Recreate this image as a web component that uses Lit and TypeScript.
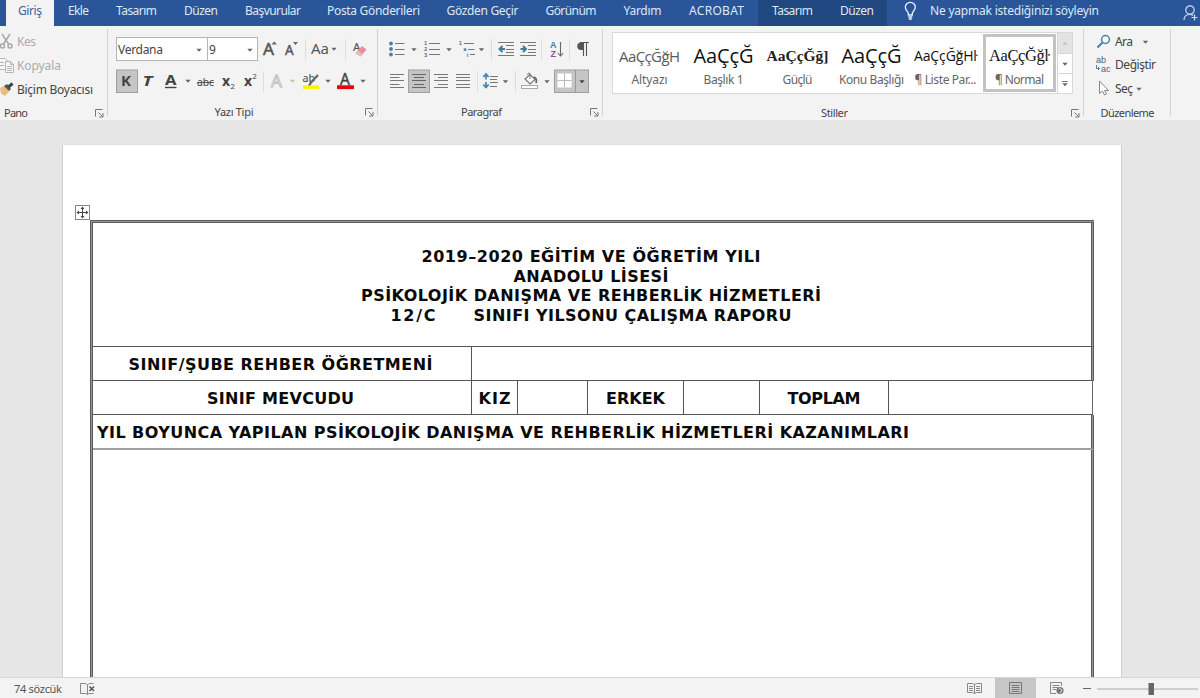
import { LitElement, html, svg, css, TemplateResult } from "lit";
import { customElement, property } from "lit/decorators.js";
import { styleMap } from "lit/directives/style-map.js";

/** A single line of text tracked out (or in) so that it takes exactly `w` pixels. */
@customElement("fit-text")
class FitText extends LitElement {
  @property() text = "";
  @property({ type: Number }) w = 0;

  static styles = css`
    :host { display: block; flex: none; }
    .run { display: inline-block; white-space: pre; }
  `;

  render() {
    return html`<span class="run">${this.text}</span>`;
  }

  updated() {
    const run = this.renderRoot.querySelector(".run") as HTMLElement;
    run.style.letterSpacing = "0px";
    const natural = run.getBoundingClientRect().width;
    const gap = (this.w - natural) / Math.max(1, this.text.length - 1);
    run.style.letterSpacing = `${gap}px`;
    run.style.marginRight = `${-gap}px`;
    this.style.width = `${this.w}px`;
  }
}

const t = (text: string, w: number) => html`<fit-text .text=${text} .w=${w}></fit-text>`;

/** Ribbon glyph; its drawing space is the ribbon's own coordinate system. */
const ic = (x: number, y: number, w: number, h: number, body: unknown) =>
  html`<svg class="ic" width=${w} height=${h} viewBox="${x} ${y} ${w} ${h}">${body}</svg>`;

const lines = (rows: [number, number, number][], color = "#777") =>
  rows.map(([x1, x2, y]) => svg`<path d="M${x1} ${y}H${x2}" stroke=${color} stroke-width="1"/>`);

const arrow = (x: number, y: number, color = "#666") =>
  svg`<path d="M${x - 2.7} ${y - 1.3}h5.4l-2.7 3z" fill=${color}/>`;

const sep = (x: number, y: number) => svg`<path d="M${x} ${y}v21" stroke="#dcdcdc"/>`;

const launcher = html`<svg class="launch" width="9" height="9" viewBox="0 0 9 9" fill="none" stroke="#777">
  <path d="M.5 7.500V.5H7.500M3.500 3.500L7.500 7.500M8 4V8H4"/></svg>`;

const ys = [74.5, 77.5, 80.5, 84.5, 87.5];

@customElement("word-tabs")
class WordTabs extends LitElement {
  static styles = css`
    :host {
      display: grid; height: 26px; background: #2a5699; color: #dfe8f5;
      grid-template-columns: 48px 49px 67px 62px 82px 119px 99px 78px 65px 83px 69px 60px 1fr 17px;
      padding-left: 6px; font: 12px/22px "Noto Sans", sans-serif;
    }
    .tab { display: flex; justify-content: center; height: 26px; }
    .on { background: #f3f3f3; color: #3a62a0; }
    .ctx { background: #20477f; }
    .tell { display: flex; padding-left: 16px; }
    .bulb { margin: 1px 12px 0 0; }
    .user { margin-top: 4px; }
  `;
  render() {
    const tabs: [string, number, string?][] = [
      ["Giriş", 24, "on"], ["Ekle", 21], ["Tasarım", 41], ["Düzen", 34], ["Başvurular", 56],
      ["Posta Gönderileri", 93], ["Gözden Geçir", 72], ["Görünüm", 51], ["Yardım", 38],
      ["ACROBAT", 55], ["Tasarım", 41, "ctx"], ["Düzen", 34, "ctx"],
    ];
    return html`
      ${tabs.map(([n, w, c]) => html`<div class="tab ${c ?? ""}">${t(n, w)}</div>`)}
      <div class="tell">
        <svg class="bulb" width="15" height="20" viewBox="0 0 15 20" fill="none" stroke="#f1f5fb" stroke-width="1.300">
          <path d="M5.300 14V12.200C4.800 10.200 2.300 9.200 2.300 6.300A5 5 0 0 1 12.300 6.300C12.300 9.200 9.800 10.200 9.300 12.200V14ZM5.300 16H9.300M5.800 18H8.800"/>
        </svg>
        ${t("Ne yapmak istediğinizi söyleyin", 169)}
      </div>
      <svg class="user" width="17" height="20" viewBox="1183 4 17 20" fill="none" stroke="#cfdcf0" stroke-width="1.200">
        <circle cx="1190" cy="10" r="4.200"/><path d="M1184 20C1184 16.500 1186.500 14.500 1190 14.500C1191.500 14.500 1192.500 15 1193 15.500M1194.500 14.500V20.500M1191.500 17.500H1197.500"/>
      </svg>`;
  }
}

@customElement("word-ribbon")
class WordRibbon extends LitElement {
  static styles = css`
    :host {
      display: grid; grid-template-columns: 108px 270px 225px 481px 87px 1fr; height: 94px;
      background: #f3f3f3; color: #444; font: 12px/16px "Noto Sans", sans-serif;
    }
    .group { display: flex; flex-direction: column; height: 91px; position: relative; }
    .group::after { content: ""; position: absolute; right: 0; top: 3px; height: 87px; width: 1px; background: #d2d2d2; }
    .rows { display: flex; flex-direction: column; gap: 8px; padding: 11px 0 0 8px; height: 68px; box-sizing: border-box; }
    .row { display: flex; height: 24px; flex: none; }
    .foot { display: flex; height: 16px; margin-top: 11px; font-size: 11px; }
    .name { flex: 1; display: flex; justify-content: center; }
    .launch { margin: 4px 4px 0 5px; flex: none; }
    .ic { display: block; flex: none; }
    .clip { padding: 4px 0 0; height: 68px; box-sizing: border-box; display: flex; flex-direction: column; }
    .line { display: flex; align-items: center; height: 24px; flex: none; }
    .line.off { color: #ababab; }
    .pano { padding-left: 4px; justify-content: flex-start; }
    .box { display: flex; box-sizing: border-box; height: 24px; border: 1px solid #b5b5b5; background: #fff; align-items: center; justify-content: space-between; padding: 2px 0 0 1px; }
    .fam { width: 92px; }
    .size { width: 51px; margin-left: -1px; }
    .gallery { display: grid; grid-template-columns: repeat(6, 74px) 15px; height: 62px; width: 461px; margin: 6px 0 0 9px; box-sizing: border-box; border: 1px solid #dadada; background: #fff; }
    .style { display: flex; flex-direction: column; align-items: center; height: 60px; box-sizing: border-box; padding: 9px 1px 0 0; }
    .picked { border: 3px solid #c3c3c3; margin: 1px 0; height: 58px; padding: 5px 0 0; width: 73px; }
    .demo { height: 28px; line-height: 28px; display: flex; }
    .cap { color: #666; line-height: 16px; margin-top: 2px; }
    .light { font: 15px/28px "Open Sans", sans-serif; color: #5a5a5a; }
    .head { font: 20px/28px "Open Sans", sans-serif; color: #111; }
    .strong { font: bold 15.500px/28px "Liberation Serif", serif; color: #222; }
    .list { font: 14px/28px "Open Sans", sans-serif; color: #111; }
    .normal { font: 16.500px/28px "Liberation Serif", serif; color: #111; }
    .scroll { display: grid; grid-template-rows: 21px 20px 19px; width: 15px; border-left: 1px solid #d5d5d5; box-sizing: border-box; }
    .step { border-bottom: 1px solid #d5d5d5; box-sizing: border-box; }
    .step.dim { background: #e3e3e3; }
    .step:last-child { border-bottom: 0; }
    .edit { display: flex; flex-direction: column; height: 68px; padding: 4px 0 0 8px; box-sizing: border-box; }
    .edit .line { height: 23.500px; }
  `;

  private group(body: TemplateResult, name: TemplateResult, launch = true, cls = "") {
    return html`<div class="group">${body}<div class="foot"><div class="name ${cls}">${name}</div>${launch ? launcher : ""}</div></div>`;
  }

  private clipboard() {
    return this.group(html`<div class="clip">
      <div class="line off">${ic(0, 30, 17, 24, svg`<g fill="none" stroke="#a9a9a9" stroke-width="1.500"><path d="M2 34L8.500 44M10 34L3.500 44"/><circle cx="2.500" cy="46" r="2"/><circle cx="10" cy="46" r="2"/></g>`)}${t("Kes", 19)}</div>
      <div class="line off">${ic(0, 54, 17, 24, svg`<g fill="#f7f7f7" stroke="#b5b5b5"><path d="M-2 58.500H5L7.500 61V69.500H-2Z"/><path d="M5.500 61.500H10.500L13.500 64.500V72.500H5.500ZM10.500 61.500V64.500H13.500"/><path d="M7 66.500H12M7 68.500H12M7 70.500H12M0 62.500H4M0 65.500H4"/></g>`)}${t("Kopyala", 44)}</div>
      <div class="line">${ic(0, 78, 17, 24, svg`<path d="M0 88L5 85.500L9.500 91L5 96L1 93.500Z" fill="#e8bd83"/><path d="M4 86L7 84L11 89L9 91Z" fill="#555"/><path d="M8.500 87L12.500 83.500" stroke="#444" stroke-width="3"/>`)}${t("Biçim Boyacısı", 76)}</div>
    </div>`, t("Pano", 24), true, "pano");
  }

  private font() {
    const bold = "bold";
    return this.group(html`<div class="rows">
      <div class="row">
        <div class="box fam">${t("Verdana", 45)}${ic(194, 39, 13, 20, arrow(199, 49))}</div>
        <div class="box size">${t("9", 7)}${ic(245, 39, 12, 20, arrow(250, 49))}</div>
        ${ic(258, 37, 119, 24, svg`
          <g font-family="Noto Sans" fill="#555">
            <text x="263" y="55" font-size="16" stroke="#555" stroke-width=".5" textLength="11" lengthAdjust="spacingAndGlyphs">A</text>
            <text x="285" y="55" font-size="13.500" stroke="#555" stroke-width=".4">A</text>
            <text x="311" y="53.500" font-size="14.500" textLength="18" lengthAdjust="spacingAndGlyphs">Aa</text>
            <text x="353" y="51" font-size="11.500" stroke="#555" stroke-width=".2">A</text></g>
          <path d="M271.500 44.500h5.500l-2.700-3z" fill="#666"/><path d="M293 42h5l-2.500 3z" fill="#666"/>
          ${arrow(334, 49)}${sep(305.5, 39)}${sep(345.5, 39)}
          <path d="M355.500 53L362 46L366.500 49.500L360.500 56.500Z" fill="#e58e9d"/><path d="M355.500 53L358 50.300L362.500 54L360.500 56.500Z" fill="#efb4bd"/>`)}
      </div>
      <div class="row">${ic(116, 69, 261, 24, svg`
          <rect x="116.500" y="70" width="21" height="22.500" fill="#c5c5c5" stroke="#a0a0a0"/>
          <g font-family="Noto Sans" fill="#444">
            <text x="121" y="86" font-size="15" font-weight=${bold}>K</text>
            <text x="142.500" y="86" font-size="15" font-weight=${bold} font-style="italic" textLength="10" lengthAdjust="spacingAndGlyphs">T</text>
            <text x="165" y="85" font-size="15" font-weight=${bold} textLength="11.500" lengthAdjust="spacingAndGlyphs">A</text>
            <text x="197" y="86" font-size="11.500" textLength="17" lengthAdjust="spacingAndGlyphs">abc</text>
            <text x="222" y="86" font-size="14" font-weight=${bold}>x</text><text x="230.500" y="88.500" font-size="7.500">2</text>
            <text x="244" y="86" font-size="14" font-weight=${bold}>x</text><text x="252.500" y="79" font-size="7.500">2</text>
            <text x="271" y="87" font-size="17" fill="#fafafa" stroke="#bdbdbd" stroke-width=".9">A</text>
            <text x="302.500" y="81.500" font-size="11" textLength="12.500" lengthAdjust="spacingAndGlyphs">ab</text>
            <text x="340" y="85" font-size="15.500" stroke="#444" stroke-width=".4">A</text></g>
          <path d="M165 87.500H176.500" stroke="#444" stroke-width="1.400"/><path d="M197 82.500H214" stroke="#555"/>
          ${arrow(188, 81)}${arrow(292.5, 81, "#c9c2ad")}${arrow(328, 81)}${arrow(363, 81)}${sep(263.5, 71)}
          <path d="M318 75L311 82.500L309 86" stroke="#666" stroke-width="2.200" fill="none"/>
          <path d="M303 87.200H319" stroke="#fbf300" stroke-width="3.400"/><path d="M337 87.200H354" stroke="#e8000d" stroke-width="3.800"/>`)}
      </div></div>`, t("Yazı Tipi", 39));
  }

  private paragraph() {
    const blue = "#4a7fa8";
    return this.group(html`<div class="rows">
      <div class="row">${ic(386, 37, 216, 24, svg`
        ${[43.5, 49, 54.5].map((y) => svg`<circle cx="391" cy=${y} r="1.900" fill=${blue}/>`)}
        ${lines([[395, 404.5, 43.5], [395, 404.5, 49.5], [395, 404.5, 54.5]])}
        ${arrow(414, 49.5)}
        ${lines([[429, 440, 43.5], [429, 440, 49.5], [429, 440, 54.5]])}
        <g font-family="Liberation Sans" font-size="5" fill="#3f6c92" stroke="#3f6c92" stroke-width=".2"><text x="424.300" y="45">1</text><text x="424.300" y="51">2</text><text x="424.300" y="57">3</text></g>
        ${arrow(449, 49.5)}
        ${lines([[464, 474, 43.5], [468, 474.5, 49.5], [470, 475, 54.5]])}
        <g font-family="Liberation Sans" font-size="5" fill="#3f6c92" stroke="#3f6c92" stroke-width=".2"><text x="459" y="45">1</text><text x="463.500" y="51">a</text><text x="467" y="57">i</text></g>
        ${arrow(481.5, 49.5)}${sep(491.5, 39)}
        ${lines([[498, 514, 42.5], [506, 514, 45.5], [506, 514, 49.5], [506, 514, 52.5], [498, 514, 55.5]])}
        <path d="M505 49H500M502.500 46L499.500 49L502.500 52" stroke="#3c7f9c" stroke-width="2" fill="none"/>
        ${lines([[520, 536, 42.5], [528, 536, 45.5], [528, 536, 49.5], [528, 536, 52.5], [520, 536, 55.5]])}
        <path d="M520.500 49H525.500M523 46L526 49L523 52" stroke="#3c7f9c" stroke-width="2" fill="none"/>
        ${sep(541.5, 39)}${sep(569.5, 39)}
        <g font-family="Liberation Sans" font-size="9" font-weight="bold"><text x="550" y="48" fill="#4480aa">A</text><text x="550.500" y="57" fill="#87529c">Z</text></g>
        <path d="M560.500 42V55.500M557.800 53L560.500 56L563.200 53" stroke="#666" stroke-width="1.100" fill="none"/>
        <path d="M583 42.500H581A3.600 3.600 0 0 0 581 50H583Z" fill="#555"/><path d="M580 42.500H589M583.500 42.500V56M586.500 42.500V56" stroke="#555" stroke-width="1.100" fill="none"/>`)}
      </div>
      <div class="row">${ic(386, 69, 216, 24, svg`
        ${lines(ys.map((y, i) => [390, i % 2 ? 399.5 : 404, y] as [number, number, number]))}
        <rect x="408.500" y="70" width="21" height="22.500" fill="#c5c5c5" stroke="#a0a0a0"/>
        ${lines(ys.map((y, i) => [i % 2 ? 414 : 412, i % 2 ? 424 : 426, y] as [number, number, number]), "#666")}
        ${lines(ys.map((y, i) => [i % 2 ? 438 : 434, 448, y] as [number, number, number]))}
        ${lines(ys.map((y) => [456, 470, y] as [number, number, number]))}
        ${sep(477.5, 71)}
        ${lines([[490, 498, 76.5], [490, 497, 79.5], [490, 498, 82.5], [490, 497, 86.5]])}
        <path d="M486 74.500V79.500M483.300 77L486 74L488.700 77M486 82V87M483.300 84.500L486 87.500L488.700 84.500" stroke="#4385b3" stroke-width="1.700" fill="none"/>
        ${arrow(505.5, 81.5)}${sep(515.5, 71)}
        <path d="M525 79L530 74.500L535 79.500L530 84Z" fill="#fff" stroke="#777" stroke-width="1.200"/><path d="M530 79V73.500Q528 72 527.500 75" fill="none" stroke="#777"/><path d="M534 77Q537.500 79 536 83" stroke="#666" stroke-width="1.800" fill="none"/>
        <rect x="521.500" y="85.500" width="16" height="3" fill="#fff" stroke="#aaa"/>
        ${arrow(547, 81.5)}
        <rect x="554.500" y="70" width="34" height="22.500" fill="#c5c5c5" stroke="#a0a0a0"/><path d="M575.500 70V92.500" stroke="#999"/>
        <rect x="557.500" y="73.500" width="14" height="14" fill="#fff"/><path d="M564.500 73.500V87.500M557.500 80.500H571.500" stroke="#bbb"/>
        ${arrow(582, 81.5, "#444")}`)}
      </div></div>`, t("Paragraf", 41));
  }

  private gallery() {
    const styles: [string, number, string, string, number][] = [
      ["AaÇçĞğH", 61, "light", "Altyazı", 36], ["AaÇçĞ", 60, "head", "Başlık 1", 40],
      ["AaÇçĞğ]", 62, "strong", "Güçlü", 30], ["AaÇçĞ", 60, "head", "Konu Başlığı", 65],
      ["AaÇçĞğHŀ", 63, "list", "¶ Liste Par...", 62], ["AaÇçĞğŀ", 61, "normal", "¶ Normal", 49],
    ];
    return this.group(html`<div class="gallery">
      ${styles.map(([s, w, c, n, nw]) => html`<div class="style ${c === "normal" ? "picked" : ""}">
        <div class="demo ${c}">${t(s, w)}</div><div class="cap">${t(n, nw)}</div></div>`)}
      <div class="scroll">
        <div class="step dim">${ic(0, 0, 14, 20, svg`<path d="M4.500 11.500h5l-2.500-2.500z" fill="#bbb"/>`)}</div>
        <div class="step">${ic(0, 0, 14, 19, arrow(7, 10))}</div>
        <div class="step">${ic(0, 0, 14, 19, svg`<path d="M4.300 7.500H9.700" stroke="#777"/>${arrow(7, 10.5)}`)}</div>
      </div></div>`, t("Stiller", 27));
  }

  private editing() {
    return this.group(html`<div class="edit">
      <div class="line">${ic(1092, 30, 23, 22, svg`<circle cx="1105.500" cy="38.500" r="3.900" fill="#fff" stroke="#4d7fae" stroke-width="1.500"/><path d="M1102.500 41.500L1097.500 46.500" stroke="#4d7fae" stroke-width="2"/>`)}${t("Ara", 18)}${ic(1133, 30, 18, 22, arrow(1145.5, 41))}</div>
      <div class="line">${ic(1092, 54, 23, 22, svg`<g font-family="Liberation Sans" font-size="9" fill="#5f5a7a"><text x="1096" y="62.500">ab</text><text x="1101" y="71.500">ac</text></g><path d="M1096.500 65V68.500H1099.500M1098 67L1099.500 68.500L1098 70" stroke="#4d7fae" fill="none"/>`)}${t("Değiştir", 41)}</div>
      <div class="line">${ic(1092, 77, 23, 22, svg`<path d="M1099.500 80V92.500L1102.500 90L1104.500 94L1106.500 93L1104.500 89.500H1108.500Z" fill="#fff" stroke="#888"/>`)}${t("Seç", 18)}${ic(1133, 77, 18, 22, arrow(1139, 88))}</div>
    </div>`, t("Düzenleme", 54), false);
  }

  render() {
    return html`${this.clipboard()}${this.font()}${this.paragraph()}${this.gallery()}${this.editing()}`;
  }
}

@customElement("word-page")
class WordPage extends LitElement {
  static styles = css`
    :host { display: block; background: #e6e6e6; padding: 24px 78px 0 62px; overflow: hidden; }
    .page { background: #fff; border: 1px solid #d0d0d0; border-top-color: #e0e0e0; box-sizing: border-box; height: 600px; padding: 75px 27px 0 27px; position: relative; }
    .handle { position: absolute; left: 12px; top: 60px; }
    .table { height: 520px; border: 3px double #5c5c5c; border-right: 0; border-bottom: 0; background: linear-gradient(#fff, #fff) padding-box, #959595 border-box; color: #0a0a0a; font: bold 16px/19.500px "DejaVu Sans", sans-serif; width: 1004px; box-sizing: border-box; }
    .r { display: flex; box-sizing: border-box; height: 34px; border-bottom: 1px solid #555; border-right: 3px double #5c5c5c; background: linear-gradient(#fff, #fff) padding-box, #959595 border-box; }
    .title { height: 124px; flex-direction: column; align-items: center; padding: 24px 2px 0 0; }
    .pair { display: flex; gap: 38px; }
    .single { border-right: 1px solid #666; margin-right: 1px; }
    .final { height: 35px; border-bottom: 2px solid #a0a0a0; padding: 2px 0 0 4px; align-items: center; }
    .body { height: 360px; border-bottom: 0; }
    .c { display: flex; align-items: center; justify-content: center; box-sizing: border-box; border-right: 1px solid #555; padding-top: 2px; }
    .lead { padding-right: 3px; }
    .c:last-child { border-right: 0; flex: 1; }
  `;
  render() {
    const cell = (w: number, body: unknown = "", cls = "") =>
      html`<div class="c ${cls}" style=${styleMap({ width: `${w}px` })}>${body}</div>`;
    return html`<div class="page">
      <svg class="handle" width="15" height="15" viewBox="0 0 15 15" fill="none" stroke="#888"><rect x=".5" y=".5" width="14" height="14" fill="#fff"/>
        <path d="M7.500 3V12M3 7.500H12" stroke="#444"/><path d="M7.500 1.500l2 2.500h-4zM7.500 13.500l2-2.500h-4zM1.500 7.500l2.500-2v4zM13.500 7.500l-2.500-2v4z" fill="#444" stroke="none"/></svg>
      <div class="table">
        <div class="r title">
          ${t("2019–2020 EĞİTİM VE ÖĞRETİM YILI", 339)}${t("ANADOLU LİSESİ", 155)}
          ${t("PSİKOLOJİK DANIŞMA VE REHBERLİK HİZMETLERİ", 460)}
          <div class="pair">${t("12/C", 45)}${t("SINIFI YILSONU ÇALIŞMA RAPORU", 318)}</div>
        </div>
        <div class="r">${cell(379, t("SINIF/ŞUBE REHBER ÖĞRETMENİ", 304), "lead")}${cell(0)}</div>
        <div class="r single">${cell(379, t("SINIF MEVCUDU", 147), "lead")}${cell(46, t("KIZ", 32))}${cell(70)}${cell(96, t("ERKEK", 59))}${cell(76)}${cell(129, t("TOPLAM", 73))}${cell(0)}</div>
        <div class="r final">${t("YIL BOYUNCA YAPILAN PSİKOLOJİK DANIŞMA VE REHBERLİK HİZMETLERİ KAZANIMLARI", 812)}</div>
        <div class="r body"></div>
      </div></div>`;
  }
}

@customElement("word-status")
class WordStatus extends LitElement {
  static styles = css`
    :host { display: flex; height: 21px; box-sizing: border-box; border-top: 1px solid #d6d6d6; background: #f3f3f3; color: #555; font: 11px/22px "Noto Sans", sans-serif; padding-left: 14px; }
    .proof { margin-left: 18px; }
    .views { margin-left: auto; }
    svg { display: block; }
  `;
  render() {
    return html`${t("74 sözcük", 48)}
      <svg class="proof" width="16" height="20" viewBox="80 678 16 20" fill="none" stroke="#888"><path d="M80.500 683.500H85.500L87.500 685V694.500L85.500 693.500H80.500ZM87.500 685L89 683.500H93.500M87.500 694.500L89 693.500H93.500"/><path d="M89.500 686.500L94 691M94 686.500L89.500 691" stroke="#555" stroke-width="1.500"/></svg>
      <svg class="views" width="240" height="20" viewBox="960 678 240 20" fill="none" stroke="#888">
        <rect x="995" y="678" width="41" height="20" fill="#c6c6c6" stroke="none"/>
        <path d="M967.500 683.500H972.500L974.500 684.500L976.500 683.500H981.500V692.500H976.500L974.500 693.500L972.500 692.500H967.500ZM974.500 684V693M969 686.500H973M969 688.500H973M969 690.500H973M976 686.500H980M976 688.500H980M976 690.500H980"/>
        <path d="M1009.500 682.500H1021.500V693.500H1009.500ZM1011.500 685.500H1019.500M1011.500 687.500H1019.500M1011.500 689.500H1019.500M1011.500 691.500H1019.500" stroke="#777"/>
        <path d="M1056 693.500H1050.500V682.500H1061.500V686M1052.500 685.500H1059.500M1052.500 687.500H1058M1052.500 689.500H1056"/>
        <circle cx="1060" cy="690.500" r="3.600" fill="#777" stroke="none"/><path d="M1059 688L1062 690L1060 693" stroke="#ddd"/>
        <path d="M1083 688.500H1091" stroke="#666"/><path d="M1097 689H1198" stroke="#aaa"/><rect x="1148.500" y="683" width="5.500" height="12" fill="#666" stroke="none"/>
      </svg>`;
  }
}

@customElement("app-root")
class AppRoot extends LitElement {
  static styles = css`
    :host { display: grid; grid-template-rows: 26px 94px 1fr 21px; width: 1200px; height: 698px; overflow: hidden; background: #e6e6e6; }
    word-page { min-height: 0; }
  `;
  render() {
    return html`<word-tabs></word-tabs><word-ribbon></word-ribbon><word-page></word-page><word-status></word-status>`;
  }
}
